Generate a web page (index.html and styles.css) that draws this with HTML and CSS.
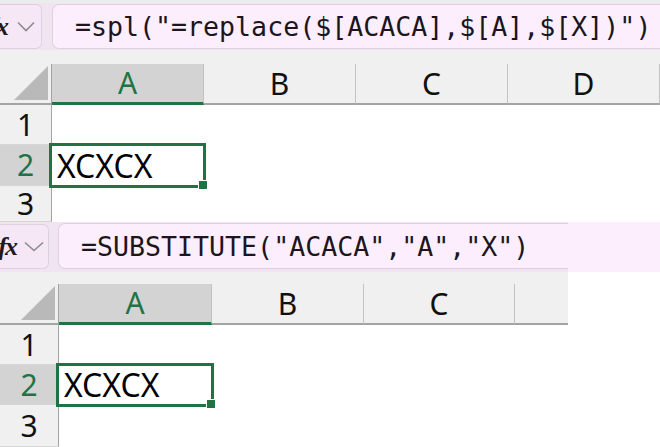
FILE: index.html
```html
<!DOCTYPE html>
<html>
<head>
<meta charset="utf-8">
<link rel="stylesheet" href="styles.css">
</head>
<body>
<div class="shot shot1">
  <div class="fbar">
    <div class="fxbox">
      <span class="fx">fx</span>
      <svg class="chev" width="18" height="11" viewBox="0 0 18 11"><path d="M1 1.5 L9 9.5 L17 1.5" fill="none" stroke="#8c8c8c" stroke-width="1.6"/></svg>
    </div>
    <div class="formula">=spl("=replace($[ACACA],$[A],$[X])")</div>
  </div>
  <div class="gapstrip"></div>
  <div class="sheet">
    <div class="corner"><span class="tri"></span></div>
    <div class="ch sel">A</div>
    <div class="ch">B</div>
    <div class="ch">C</div>
    <div class="ch">D</div>

    <div class="rh">1</div>
    <div class="c"></div><div class="c"></div><div class="c"></div><div class="c"></div>

    <div class="rh sel">2</div>
    <div class="c active">XCXCX</div><div class="c"></div><div class="c"></div><div class="c"></div>

    <div class="rh">3</div>
    <div class="c"></div><div class="c"></div><div class="c"></div><div class="c"></div>
  </div>
</div>

<div class="shot shot2">
  <div class="fbar">
    <div class="fxbox">
      <span class="fx">fx</span>
      <svg class="chev" width="20" height="11" viewBox="0 0 20 11"><path d="M1 1.5 L10 9.5 L19 1.5" fill="none" stroke="#8c8c8c" stroke-width="1.6"/></svg>
    </div>
    <div class="formula">=SUBSTITUTE("ACACA","A","X")</div>
  </div>
  <div class="gapstrip"></div>
  <div class="sheet">
    <div class="corner"><span class="tri"></span></div>
    <div class="ch sel">A</div>
    <div class="ch">B</div>
    <div class="ch">C</div>
    <div class="ch last"></div>

    <div class="rh">1</div>
    <div class="c"></div><div class="c"></div><div class="c"></div><div class="c"></div>

    <div class="rh sel">2</div>
    <div class="c active">XCXCX</div><div class="c"></div><div class="c"></div><div class="c"></div>

    <div class="rh">3</div>
    <div class="c"></div><div class="c"></div><div class="c"></div><div class="c"></div>
  </div>
</div>
</body>
</html>
```

FILE: styles.css
```css
* { box-sizing: border-box; }
html, body { margin: 0; padding: 0; background: #fff; }
body { width: 660px; height: 447px; overflow: hidden; font-family: "Noto Sans", "Open Sans", sans-serif; }

.shot { overflow: hidden; }

/* formula bar */
.fbar {
  display: flex;
  align-items: stretch;
  background: #f1e4f1;
  overflow: hidden;
}
.fxbox {
  display: flex;
  align-items: center;
  justify-content: flex-end;
  gap: 8px;
  overflow: hidden;
  background: #f5e7f5;
  border: 1px solid #e0cfe0;
  border-radius: 6px;
  flex: none;
}
.fx {
  font-family: "Liberation Serif", "DejaVu Serif", serif;
  font-style: italic;
  font-weight: bold;
  font-size: 26px;
  letter-spacing: -2px;
  color: #1e1a1e;
  white-space: nowrap;
  line-height: 1;
  flex: none;
}
.chev { flex: none; }
.formula {
  flex: 1;
  display: flex;
  align-items: center;
  background: #fdeefd;
  border: 1px solid #e0d0e0;
  border-right: none;
  border-radius: 7px 0 0 7px;
  font-family: "DejaVu Sans Mono", "Liberation Mono", monospace;
  font-size: 26.6px;
  color: #1c161c;
  white-space: nowrap;
}

.gapstrip { background: #f0f0f0; }

/* sheet grid */
.sheet { display: grid; background: #fff; }
.corner {
  background: #f0f0f0;
  border-right: 1px solid #a3a3a3;
  border-bottom: 2px solid #a3a3a3;
  display: flex;
  align-items: flex-end;
  justify-content: flex-end;
  padding: 0 3px 3px 0;
}
.tri {
  width: 34px; height: 34px;
  background: #b9b9b9;
  clip-path: polygon(100% 0, 100% 100%, 0 100%);
}
.ch {
  background: #f0f0f0;
  border-right: 1px solid #c2c2c2;
  border-bottom: 2px solid #a3a3a3;
  display: flex; align-items: center; justify-content: center;
  font-size: 30px; color: #111;
  line-height: 1;
}
.ch.sel {
  background: #d3d3d3;
  color: #217346;
  border-bottom: 3px solid #217346;
}
.ch.last { border-right: none; }
.rh {
  background: #f0f0f0;
  border-right: 1px solid #a3a3a3;
  border-bottom: 1px solid #d6d6d6;
  display: flex; align-items: center; justify-content: center;
  font-size: 30px; color: #111;
  line-height: 1;
}
.rh.sel { background: #d3d3d3; color: #217346; }
.c { background: #fff; }
.c.active {
  position: relative;
  display: flex; align-items: center;
  padding-left: 5px;
  font-size: 32px; color: #000;
  line-height: 1;
}
.c.active::after {
  content: "";
  position: absolute;
  top: -2px; left: -3px; right: -2px; bottom: -2px;
  border: 3px solid #217346;
}
.c.active::before {
  content: "";
  position: absolute;
  width: 8px; height: 8px;
  right: -3px; bottom: -3px;
  background: #217346;
  box-shadow: 0 0 0 1px #fff;
  z-index: 2;
}

/* shot 1 */
.shot1 { height: 222px; }
.shot1 .fbar { height: 50px; padding: 1px 0 1px 0; border-top: 3px solid #ececec; }
.shot1 .fxbox { width: 42px; border-left: none; border-radius: 0 6px 6px 0; padding-right: 6px; }
.shot1 .fx { margin-right: 2px; }
.shot1 .formula { margin-left: 10px; padding-left: 22px; }
.shot1 .gapstrip { height: 14px; }
.shot1 .sheet {
  grid-template-columns: 52px 152px 152px 152px 152px;
  grid-template-rows: 41px 40px 41px 36px;
}

/* shot 2 */
.shot2 { height: 225px; }
.shot2 .fbar {
  width: 660px; height: 50px; padding: 1px 0 3px 0;
  background: linear-gradient(to right, #f1e4f1 568px, #fdeefd 568px);
}
.shot2 .fxbox { width: 49px; border-left: none; border-radius: 0 6px 6px 0; padding-right: 4px; margin-top: 1px; }
.shot2 .formula { flex: none; width: 510px; margin-left: 9px; padding-left: 22px; }
.shot2 .gapstrip { height: 12px; width: 568px; }
.shot2 .sheet {
  width: 568px;
  grid-template-columns: 59px 153px 152px 151px 53px;
  grid-template-rows: 41px 40px 40px 42px;
}
```
